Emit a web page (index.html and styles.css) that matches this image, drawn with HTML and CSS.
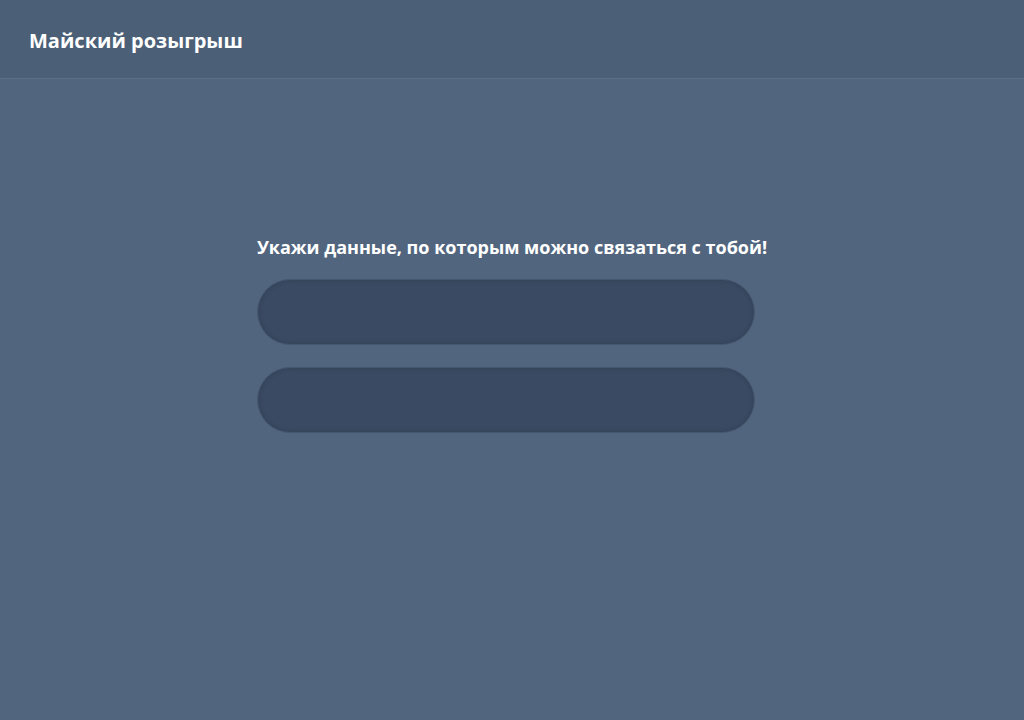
FILE: index.html
```html
<!DOCTYPE html>
<html lang="ru">
<head>
<meta charset="utf-8">
<link rel="stylesheet" href="styles.css">
</head>
<body>
<header class="header">
  <h1 class="header-title">Майский розыгрыш</h1>
</header>
<main class="main">
  <form class="form">
    <h2 class="form-title">Укажи данные, по которым можно связаться с тобой!</h2>
    <input class="field" type="text">
    <input class="field" type="text">
  </form>
</main>
</body>
</html>
```
FILE: styles.css
```css
html, body {
  margin: 0;
  padding: 0;
  height: 100%;
}
body {
  background: #52657e;
  font-family: "Open Sans", "Noto Sans", sans-serif;
  color: #fff;
}
.header {
  height: 79px;
  box-sizing: border-box;
  background: #4b5f77;
  border-bottom: 1px solid #5d6f87;
  display: flex;
  align-items: center;
  padding-left: 29px;
}
.header-title {
  margin: 0;
  font-size: 20px;
  font-weight: 700;
  line-height: 1;
  padding-top: 4px;
}
.main {
  display: flex;
  justify-content: center;
  padding-top: 156px;
}
.form {
  width: 511px;
  display: flex;
  flex-direction: column;
  gap: 22px;
}
.form-title {
  margin: 0 0 -2px 0;
  font-size: 18px;
  font-weight: 700;
  line-height: 24px;
  text-align: center;
  white-space: nowrap;
}
.field {
  width: 498px;
  height: 66px;
  box-sizing: border-box;
  border-radius: 33px;
  border: 1px solid #46576f;
  background: #3a4a62;
  box-shadow: inset 0 0 4px rgba(20, 30, 45, 0.25);
  outline: none;
  margin: 0;
  padding: 0 30px;
}
```
